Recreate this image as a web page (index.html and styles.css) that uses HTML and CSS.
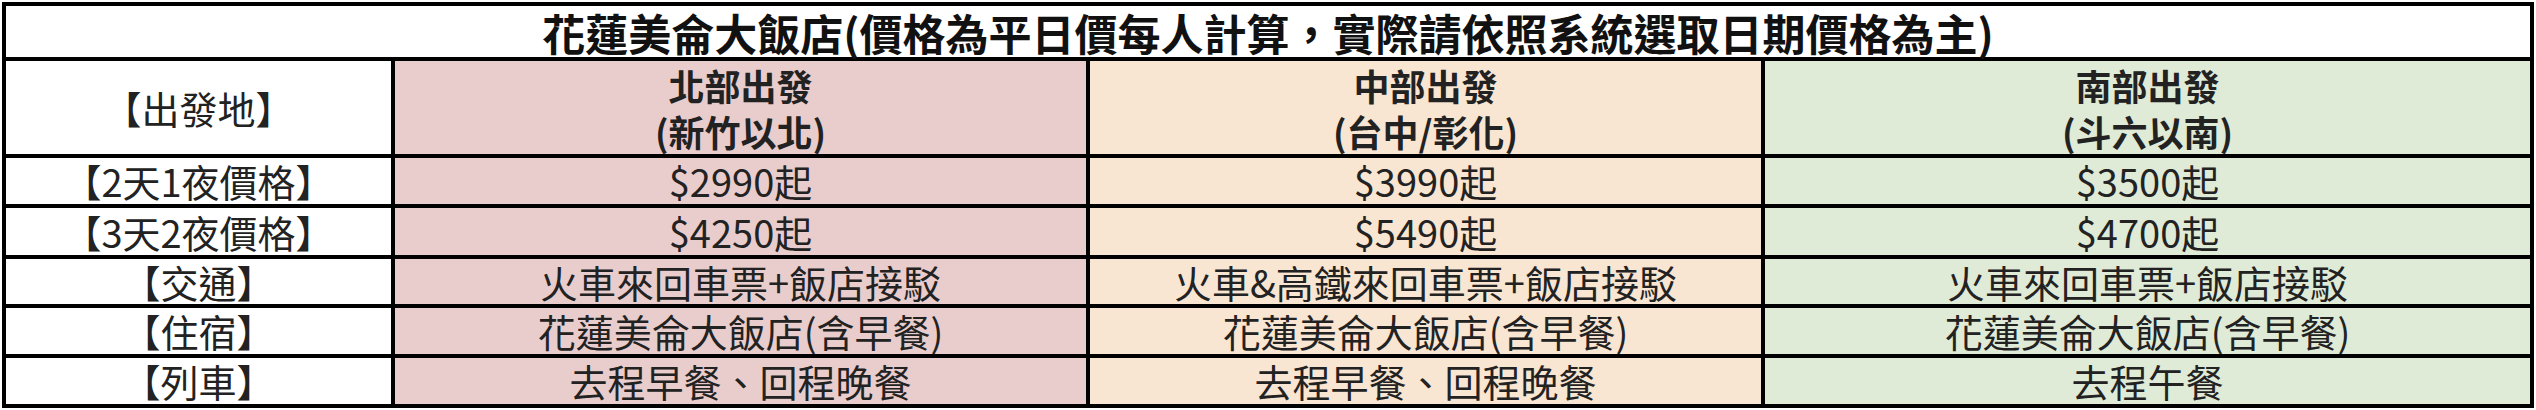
FILE: index.html
```html
<!DOCTYPE html>
<html lang="zh-Hant">
<head>
<meta charset="utf-8">
<title>花蓮美侖大飯店</title>
<link rel="stylesheet" href="styles.css">
</head>
<body>
<div class="table">
  <div class="cell title">花蓮美侖大飯店(價格為平日價每人計算，實際請依照系統選取日期價格為主)</div>

  <div class="cell label">【出發地】</div>
  <div class="cell head north"><span class="line">北部出發</span><span class="line">(新竹以北)</span></div>
  <div class="cell head central"><span class="line">中部出發</span><span class="line">(台中/彰化)</span></div>
  <div class="cell head south"><span class="line">南部出發</span><span class="line">(斗六以南)</span></div>

  <div class="cell label">【2天1夜價格】</div>
  <div class="cell north">$2990起</div>
  <div class="cell central">$3990起</div>
  <div class="cell south">$3500起</div>

  <div class="cell label">【3天2夜價格】</div>
  <div class="cell north">$4250起</div>
  <div class="cell central">$5490起</div>
  <div class="cell south">$4700起</div>

  <div class="cell label">【交通】</div>
  <div class="cell north">火車來回車票+飯店接駁</div>
  <div class="cell central">火車&amp;高鐵來回車票+飯店接駁</div>
  <div class="cell south">火車來回車票+飯店接駁</div>

  <div class="cell label">【住宿】</div>
  <div class="cell north">花蓮美侖大飯店(含早餐)</div>
  <div class="cell central">花蓮美侖大飯店(含早餐)</div>
  <div class="cell south">花蓮美侖大飯店(含早餐)</div>

  <div class="cell label">【列車】</div>
  <div class="cell north">去程早餐、回程晚餐</div>
  <div class="cell central">去程早餐、回程晚餐</div>
  <div class="cell south">去程午餐</div>
</div>
</body>
</html>
```

FILE: styles.css
```css
html, body {
  margin: 0;
  padding: 0;
  background: #ffffff;
}

body {
  padding: 2px;
  font-family: "Noto Sans CJK TC", "Noto Sans CJK SC", "Noto Sans", sans-serif;
  color: #222222;
}

.table {
  display: grid;
  grid-template-columns: 385px 691px 671px 765px;
  grid-template-rows: 51px 93px 46px 47px 45px 46px 46px;
  gap: 4px;
  padding: 4px;
  background: #000000;
  width: max-content;
}

.cell {
  display: flex;
  align-items: center;
  justify-content: center;
  text-align: center;
  background: #ffffff;
  font-size: 38px;
  line-height: 46px;
  white-space: nowrap;
}

.title {
  grid-column: 1 / -1;
  font-size: 43px;
  font-weight: 700;
  color: #111111;
  line-height: 50px;
}

.head {
  flex-direction: column;
  font-size: 36px;
  font-weight: 700;
}

.head .line {
  display: block;
  line-height: 46px;
}

.north {
  background: #e9cdcd;
}

.central {
  background: #f8e5d2;
}

.south {
  background: #dfead7;
}
```
